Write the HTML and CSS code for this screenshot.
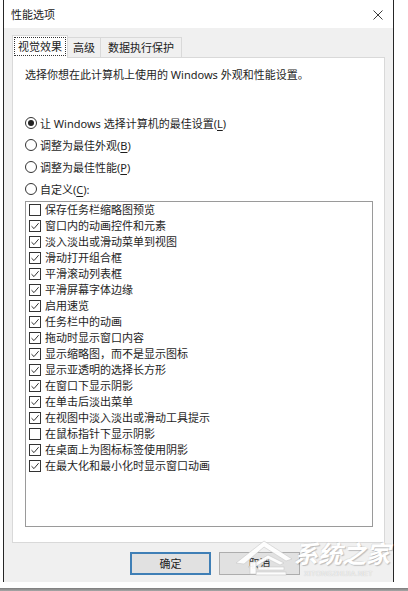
FILE: index.html
```html
<!DOCTYPE html>
<html lang="zh-CN">
<head>
<meta charset="utf-8">
<title>性能选项</title>
<link rel="stylesheet" href="styles.css">
</head>
<body>
<div class="window">
  <div class="titlebar">
    <span class="title">性能选项</span>
    <svg class="close" width="10" height="10" viewBox="0 0 10 10"><path d="M0.5 0.5L9.5 9.5M9.5 0.5L0.5 9.5" stroke="#3a3a3a" stroke-width="1" fill="none"/></svg>
  </div>
  <div class="tabs">
    <div class="tab active"><span class="focus">视觉效果</span></div>
    <div class="tab">高级</div>
    <div class="tab tab-wide">数据执行保护</div>
  </div>
  <div class="panel">
    <p class="intro">选择你想在此计算机上使用的 Windows 外观和性能设置。</p>
    <div class="radios">
      <div class="radio"><span class="rb on"></span>让 Windows 选择计算机的最佳设置(<u>L</u>)</div>
      <div class="radio"><span class="rb"></span>调整为最佳外观(<u>B</u>)</div>
      <div class="radio"><span class="rb"></span>调整为最佳性能(<u>P</u>)</div>
      <div class="radio"><span class="rb"></span>自定义(<u>C</u>):</div>
    </div>
    <div class="list">
      <div class="item"><span class="cb"></span>保存任务栏缩略图预览</div>
      <div class="item"><span class="cb"><svg viewBox="0 0 10 10"><path d="M1.5 5.2L4 7.6L8.6 2.2"/></svg></span>窗口内的动画控件和元素</div>
      <div class="item"><span class="cb"><svg viewBox="0 0 10 10"><path d="M1.5 5.2L4 7.6L8.6 2.2"/></svg></span>淡入淡出或滑动菜单到视图</div>
      <div class="item"><span class="cb"><svg viewBox="0 0 10 10"><path d="M1.5 5.2L4 7.6L8.6 2.2"/></svg></span>滑动打开组合框</div>
      <div class="item"><span class="cb"><svg viewBox="0 0 10 10"><path d="M1.5 5.2L4 7.6L8.6 2.2"/></svg></span>平滑滚动列表框</div>
      <div class="item"><span class="cb"><svg viewBox="0 0 10 10"><path d="M1.5 5.2L4 7.6L8.6 2.2"/></svg></span>平滑屏幕字体边缘</div>
      <div class="item"><span class="cb"><svg viewBox="0 0 10 10"><path d="M1.5 5.2L4 7.6L8.6 2.2"/></svg></span>启用速览</div>
      <div class="item"><span class="cb"><svg viewBox="0 0 10 10"><path d="M1.5 5.2L4 7.6L8.6 2.2"/></svg></span>任务栏中的动画</div>
      <div class="item"><span class="cb"><svg viewBox="0 0 10 10"><path d="M1.5 5.2L4 7.6L8.6 2.2"/></svg></span>拖动时显示窗口内容</div>
      <div class="item"><span class="cb"><svg viewBox="0 0 10 10"><path d="M1.5 5.2L4 7.6L8.6 2.2"/></svg></span>显示缩略图，而不是显示图标</div>
      <div class="item"><span class="cb"><svg viewBox="0 0 10 10"><path d="M1.5 5.2L4 7.6L8.6 2.2"/></svg></span>显示亚透明的选择长方形</div>
      <div class="item"><span class="cb"><svg viewBox="0 0 10 10"><path d="M1.5 5.2L4 7.6L8.6 2.2"/></svg></span>在窗口下显示阴影</div>
      <div class="item"><span class="cb"><svg viewBox="0 0 10 10"><path d="M1.5 5.2L4 7.6L8.6 2.2"/></svg></span>在单击后淡出菜单</div>
      <div class="item"><span class="cb"><svg viewBox="0 0 10 10"><path d="M1.5 5.2L4 7.6L8.6 2.2"/></svg></span>在视图中淡入淡出或滑动工具提示</div>
      <div class="item"><span class="cb"></span>在鼠标指针下显示阴影</div>
      <div class="item"><span class="cb"><svg viewBox="0 0 10 10"><path d="M1.5 5.2L4 7.6L8.6 2.2"/></svg></span>在桌面上为图标标签使用阴影</div>
      <div class="item"><span class="cb"><svg viewBox="0 0 10 10"><path d="M1.5 5.2L4 7.6L8.6 2.2"/></svg></span>在最大化和最小化时显示窗口动画</div>
    </div>
  </div>
  <div class="buttons">
    <button class="btn default">确定</button>
    <button class="btn">取消</button>
  </div>
</div>
<div class="bottom-gap"></div>
<div class="bottom-line"></div>

<div class="watermark">
  <svg class="wm-logo" width="60" height="42" viewBox="0 0 60 42">
    <g fill="#ffffff" stroke="#c8c8c8" stroke-width="0.6">
      <polygon points="2,26 30,4 58,22 52,24 30,10 10,27"/>
      <polygon points="14,30 34,18 50,26 46,28 34,22 18,32"/>
      <rect x="24" y="30" width="26" height="3"/>
      <rect x="22" y="35" width="30" height="3"/>
      <rect x="16" y="25" width="6" height="12"/>
    </g>
  </svg>
  <div class="wm-text">
    <span class="wm-big">系统之家</span>
    <span class="wm-small">XITONGZHIJIA.NET</span>
  </div>
</div>
</body>
</html>
```

FILE: styles.css
```css
html, body {
  margin: 0;
  padding: 0;
  background: #ffffff;
}

body {
  width: 408px;
  height: 591px;
  overflow: hidden;
  position: relative;
  font-family: "Noto Sans", "Noto Sans CJK SC", sans-serif;
  font-size: 11px;
  color: #1e1e1e;
}

.window {
  box-sizing: border-box;
  margin-left: 3px;
  width: 391px;
  height: 582px;
  border-left: 1px solid #262626;
  border-right: 1px solid #262626;
  background: #f0f0f0;
  display: flex;
  flex-direction: column;
}

.titlebar {
  height: 28px;
  flex: none;
  background: #ffffff;
  display: flex;
  align-items: center;
  justify-content: space-between;
  padding: 0 10px 0 7px;
  box-sizing: border-box;
}

.title {
  font-size: 11px;
  line-height: 14px;
  margin-top: 2px;
  color: #222;
}

.close {
  display: block;
  margin-top: 2px;
}

.tabs {
  margin-top: 7px;
  height: 22px;
  flex: none;
  display: flex;
  align-items: flex-end;
  padding-left: 8px;
}

.tab {
  box-sizing: border-box;
  height: 20px;
  border: 1px solid #d9d9d9;
  border-bottom: none;
  background: #f0f0f0;
  padding: 0 5px;
  line-height: 19px;
  margin-left: -1px;
  color: #222;
}

.tab-wide {
  padding: 0 7px;
}

.tab.active {
  height: 23px;
  margin-left: 0;
  margin-bottom: -1px;
  background: #ffffff;
  padding: 1px 1px 0;
  position: relative;
  z-index: 1;
}

.focus {
  display: block;
  border: 1px dotted #333;
  padding: 0 3px;
  line-height: 17px;
}

.panel {
  flex: none;
  margin: 0 8px;
  box-sizing: border-box;
  height: 486px;
  background: #ffffff;
  border: 1px solid #d9d9d9;
  padding: 10px 11px 0 12px;
}

.intro {
  margin: 0;
  line-height: 14px;
  white-space: nowrap;
}

.radios {
  margin-top: 30px;
  display: flex;
  flex-direction: column;
}

.radio {
  height: 22px;
  display: flex;
  align-items: center;
  white-space: nowrap;
  text-underline-offset: 2px;
}

.rb {
  box-sizing: border-box;
  width: 12px;
  height: 12px;
  border: 1px solid #333;
  border-radius: 50%;
  margin-right: 3px;
  flex: none;
  display: flex;
  align-items: center;
  justify-content: center;
}

.rb.on::after {
  content: "";
  width: 6px;
  height: 6px;
  border-radius: 50%;
  background: #222;
}

.list {
  margin-top: 1px;
  box-sizing: border-box;
  height: 326px;
  border: 1px solid #9a9a9a;
  background: #ffffff;
  display: flex;
  flex-direction: column;
}

.item {
  height: 16px;
  display: flex;
  align-items: center;
  white-space: nowrap;
  line-height: 16px;
}

.cb {
  box-sizing: border-box;
  width: 12px;
  height: 12px;
  border: 1px solid #333;
  margin: 0 4px 0 3px;
  flex: none;
  display: flex;
  align-items: center;
  justify-content: center;
  background: #fff;
}

.cb svg {
  width: 10px;
  height: 10px;
  display: block;
}

.cb svg path {
  fill: none;
  stroke: #333;
  stroke-width: 1;
}

.buttons {
  flex: none;
  margin-top: 9px;
  display: flex;
  gap: 8px;
  padding-left: 126px;
}

.btn {
  box-sizing: border-box;
  width: 81px;
  height: 23px;
  border: 1px solid #adadad;
  background: #e1e1e1;
  font-family: "Noto Sans", "Noto Sans CJK SC", sans-serif;
  font-size: 11px;
  color: #222;
  padding: 0;
  line-height: 20px;
}

.btn.default {
  border: 2px solid #3f7fb6;
  line-height: 18px;
}

.bottom-gap {
  height: 6px;
}

.bottom-line {
  height: 3px;
  background: linear-gradient(#7c7c7c, #a8a8a8);
}

.watermark {
  position: absolute;
  left: 234px;
  top: 537px;
  display: flex;
  align-items: flex-start;
  pointer-events: none;
}

.wm-logo {
  display: block;
  opacity: 0.95;
}

.wm-text {
  display: flex;
  flex-direction: column;
  margin-left: 0;
  margin-top: 3px;
}

.wm-big {
  font-family: "Noto Sans CJK SC", sans-serif;
  font-weight: 700;
  font-size: 24px;
  line-height: 26px;
  font-style: italic;
  color: #ffffff;
  text-shadow: 1px 1px 1px rgba(0,0,0,0.22), -1px -1px 0 rgba(0,0,0,0.06);
  white-space: nowrap;
}

.wm-small {
  font-family: "Liberation Sans", sans-serif;
  font-size: 7px;
  line-height: 8px;
  margin-top: 4px;
  color: #f4f4f4;
  margin-left: 10px;
  letter-spacing: 0.3px;
  text-shadow: 0 0 1px rgba(0,0,0,0.25);
  white-space: nowrap;
}
```
